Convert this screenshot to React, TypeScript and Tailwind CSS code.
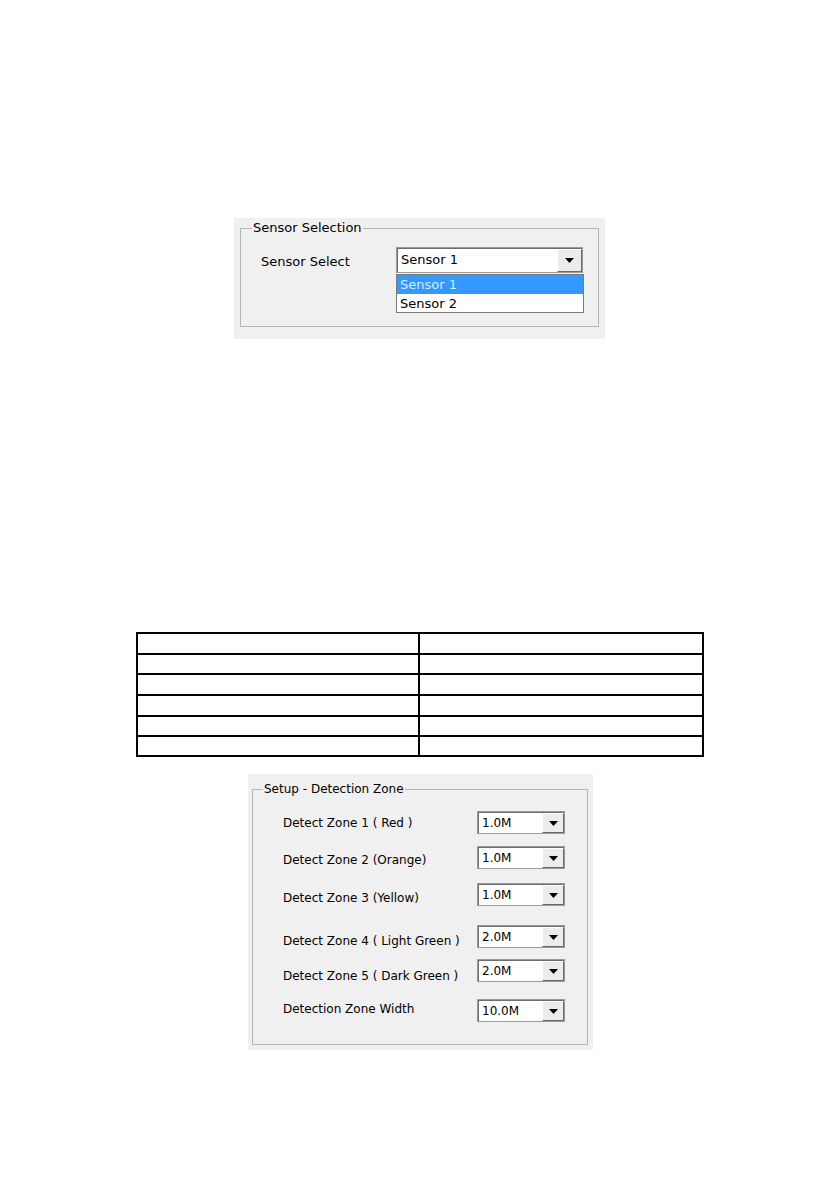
import React from "react";

const font = { fontFamily: '"DejaVu Sans", Tahoma, Verdana, sans-serif' };

function Arrow() {
  return (
    <svg width="9" height="5" viewBox="0 0 9 5">
      <path d="M0 0 H9 L4.5 5 Z" fill="#000" />
    </svg>
  );
}

function Combo({
  value,
  w,
  h,
  btn,
  text,
}: {
  value: string;
  w: string;
  h: string;
  btn: string;
  text: string;
}) {
  return (
    <div
      className={`${w} ${h} flex shrink-0 border border-[#9a9a9a] bg-white`}
    >
      <div className="flex flex-1 border-t border-l border-[#6e6e6e]">
        <div className={`flex-1 pl-[3px] leading-[15px] text-black ${text} pt-[3px]`}>
          {value}
        </div>
        <div
          className={`${btn} flex items-center justify-center border-t border-l border-t-white border-l-white border-r border-b border-r-[#6a6a6a] border-b-[#6a6a6a] bg-[#ececec]`}
        >
          <Arrow />
        </div>
      </div>
    </div>
  );
}

const rows = [
  { label: "Detect Zone 1 ( Red )", value: "1.0M", mt: "mt-[21px]", lt: "mt-[5px]" },
  { label: "Detect Zone 2 (Orange)", value: "1.0M", mt: "mt-[12px]", lt: "mt-[7px]" },
  { label: "Detect Zone 3 (Yellow)", value: "1.0M", mt: "mt-[14px]", lt: "mt-[8px]" },
  { label: "Detect Zone 4 ( Light Green )", value: "2.0M", mt: "mt-[19px]", lt: "mt-[9px]" },
  { label: "Detect Zone 5 ( Dark Green )", value: "2.0M", mt: "mt-[11px]", lt: "mt-[10px]" },
  { label: "Detection Zone Width", value: "10.0M", mt: "mt-[17px]", lt: "mt-[3px]" },
];

const tableRows = ["h-[21px]", "h-[20px]", "h-[21px]", "h-[21px]", "h-[20px]", "h-[20px]"];

export default function App() {
  return (
    <div className="min-h-[1191px] w-[839px] bg-white pt-[218px]" style={font}>
      {/* Sensor Selection panel */}
      <div className="ml-[234px] h-[121px] w-[371px] bg-[#f0f0f0] pl-[6px] pt-[10px]">
        <div className="relative h-[99px] w-[359px] border border-[#b5b5b5]">
          <span className="absolute left-[11px] top-[-9px] bg-[#f0f0f0] px-[1px] text-[13px] leading-[16px] text-black">
            Sensor Selection
          </span>
          <div className="flex pl-[20px] pt-[18px]">
            <div className="w-[135px] pt-[7px] text-[13px] leading-[16px] text-black">
              Sensor Select
            </div>
            <div className="relative">
              <Combo value="Sensor 1" w="w-[187px]" h="h-[26px]" btn="w-[25px]" text="text-[13px]" />
              <div className="absolute left-0 top-[27px] w-[188px] border border-[#7a7a7a] bg-white text-[13px] leading-[19px]">
                <div className="h-[19px] bg-[#3399ff] pl-[3px] text-[#d6ebff]">Sensor 1</div>
                <div className="h-[18px] pl-[3px] text-black">Sensor 2</div>
              </div>
            </div>
          </div>
        </div>
      </div>

      {/* Table */}
      <table className="ml-[136px] mt-[293px] w-[568px] border-collapse">
        <tbody>
          {tableRows.map((h, i) => (
            <tr key={i} className={h}>
              <td className="w-[282px] border-2 border-black p-0"></td>
              <td className="border-2 border-black p-0"></td>
            </tr>
          ))}
        </tbody>
      </table>

      {/* Setup - Detection Zone panel */}
      <div className="ml-[248px] mt-[17px] h-[276px] w-[345px] bg-[#f0f0f0] pl-[4px] pt-[15px]">
        <div className="relative h-[256px] w-[336px] border border-[#b5b5b5]">
          <span className="absolute left-[10px] top-[-8px] bg-[#f0f0f0] px-[1px] text-[12px] leading-[15px] text-black">
            Setup - Detection Zone
          </span>
          <div className="flex flex-col">
            {rows.map((r) => (
              <div key={r.label} className={`flex h-[23px] overflow-visible ${r.mt}`}>
                <div className={`h-[15px] w-[224px] shrink-0 whitespace-nowrap pl-[30px] text-[12px] leading-[15px] text-black ${r.lt}`}>
                  {r.label}
                </div>
                <Combo value={r.value} w="w-[88px]" h="h-[23px]" btn="w-[22px]" text="text-[12px]" />
              </div>
            ))}
          </div>
        </div>
      </div>
    </div>
  );
}
